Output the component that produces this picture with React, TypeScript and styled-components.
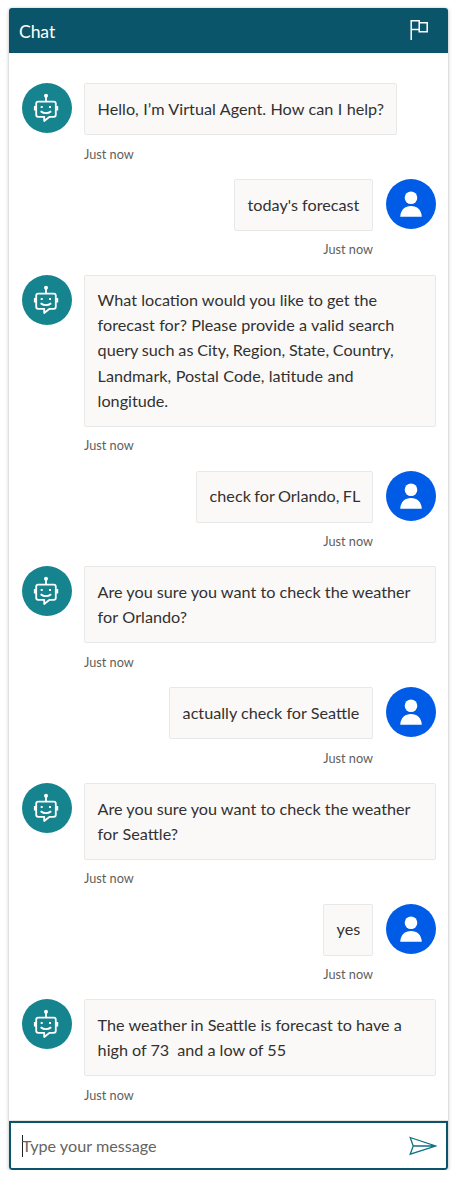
import React from "react";
import styled, { createGlobalStyle } from "styled-components";

const Global = createGlobalStyle`
  * { box-sizing: border-box; }
  body { margin: 0; background: #fff; font-family: Lato, "Liberation Sans", sans-serif; color: #323130; }
`;

const Panel = styled.main`
  display: flex;
  flex-direction: column;
  width: 439px;
  height: 1162px;
  margin: 8px 0 0 9px;
  border-radius: 3px;
  overflow: hidden;
  background: #fff;
  box-shadow: 0 1.5px 4px rgba(0, 0, 0, 0.22), 0 0 2px rgba(0, 0, 0, 0.12);
`;

const Header = styled.header`
  display: flex;
  align-items: center;
  justify-content: space-between;
  height: 45px;
  flex: none;
  padding: 0 20px 0 10px;
  background: #0b556a;
  color: #fff;
`;

const Title = styled.h1`
  margin: 2px 0 0;
  font-size: 17.6px;
  font-weight: 400;
  letter-spacing: -0.1px;
`;

const FlagIcon = styled.svg`
  width: 18px;
  height: 20px;
  margin-bottom: 1px;
`;

const Transcript = styled.section`
  flex: 1;
  padding: 30.16px 12px 0 13px;
`;

const Row = styled.article<{ $user?: boolean }>`
  display: flex;
  flex-direction: ${(p) => (p.$user ? "row-reverse" : "row")};
  gap: ${(p) => (p.$user ? 13 : 12)}px;
`;

const Avatar = styled.svg`
  width: 50px;
  height: 50px;
  flex: none;
`;

const Content = styled.div<{ $user?: boolean }>`
  display: flex;
  flex-direction: column;
  flex: 1;
  align-items: ${(p) => (p.$user ? "flex-end" : "flex-start")};
`;

const Bubble = styled.div<{ $width: number }>`
  width: ${(p) => p.$width}px;
  padding: 11.65625px 0 13.25px 12.6px;
  border: 1px solid #e9e8e8;
  border-radius: 2px;
  background: #faf9f8;
`;

const Line = styled.div<{ $space: number }>`
  font-size: 16.2px;
  line-height: 25.09375px;
  white-space: pre;
  word-spacing: ${(p) => p.$space}px;
`;

const Stamp = styled.time`
  height: 43.703125px;
  padding-top: 9.4px;
  font-size: 12.7px;
  line-height: 18px;
  color: #605e5c;
`;

const Composer = styled.footer`
  display: flex;
  align-items: center;
  justify-content: space-between;
  height: 49px;
  flex: none;
  padding: 0 9px 0 11px;
  border: 2px solid #0b556a;
  border-radius: 0 0 3px 3px;
  box-shadow: 0 -1px 0 #e6e4e2;
`;

const Entry = styled.div`
  display: flex;
  align-items: center;
  font-size: 16.2px;
  color: #666462;
`;

const Caret = styled.span`
  width: 1px;
  height: 22px;
  margin-right: -1px;
  background: #222;
`;

const SendIcon = styled.svg`
  width: 28px;
  height: 20px;
`;

const BotAvatar = () => (
  <Avatar viewBox="0 0 50 50" fill="none" stroke="#fff" strokeWidth="1.8">
    <circle cx="25" cy="25" r="25" fill="#16848e" stroke="none" />
    <path d="M24 13v5.2" />
    <circle cx="24" cy="12.8" r="2" fill="#fff" stroke="none" />
    <path d="M16.2 18.6h15.6q2 0 2 2v11.2q0 2-2 2h-4.2L22.2 38v-4.2h-6q-2 0-2-2V20.6q0-2 2-2Z" strokeLinejoin="round" />
    <path d="M12.9 23v4.6M35.2 23v4.6" strokeWidth="2" />
    <path d="M18.7 24h2M27 24h2" strokeWidth="2" />
    <path d="M18.6 28.2q5.4 4 10.6 0" />
  </Avatar>
);

const UserAvatar = () => (
  <Avatar viewBox="0 0 50 50" fill="#fff">
    <circle cx="25" cy="25" r="25" fill="#005ce6" />
    <circle cx="25" cy="18.7" r="6.3" />
    <path d="M14.2 37.7C14.5 31 19 27 25 27s10.5 4 10.8 10.7Z" />
  </Avatar>
);

type Message = { user?: boolean; width: number; lines: [text: string, space: number][] };

const messages: Message[] = [
  { width: 313, lines: [["Hello, I’m Virtual Agent. How can I help?", 0.3]] },
  { user: true, width: 139, lines: [["today's forecast", 0]] },
  {
    width: 352,
    lines: [
      ["What location would you like to get the", 0],
      ["forecast for? Please provide a valid search", 0.2],
      ["query such as City, Region, State, Country,", -0.4],
      ["Landmark, Postal Code, latitude and", 0.3],
      ["longitude.", 0],
    ],
  },
  { user: true, width: 177, lines: [["check for Orlando, FL", -0.7]] },
  { width: 352, lines: [["Are you sure you want to check the weather", 0], ["for Orlando?", 0.5]] },
  { user: true, width: 204, lines: [["actually check for Seattle", 0]] },
  { width: 352, lines: [["Are you sure you want to check the weather", 0], ["for Seattle?", 0.7]] },
  { user: true, width: 50, lines: [["yes", 0]] },
  { width: 352, lines: [["The weather in Seattle is forecast to have a", 0], ["high of 73  and a low of 55", -0.1]] },
];

export default function App() {
  return (
    <>
      <Global />
      <Panel>
        <Header>
          <Title>Chat</Title>
          <FlagIcon viewBox="0 0 18 20" fill="none" stroke="#fff" strokeWidth="1.5">
            <path d="M1.2 20V.8h8v8.7h-8M9.2 2.8h8v8.9H9.2V9.5" />
          </FlagIcon>
        </Header>
        <Transcript>
          {messages.map((m, i) => (
            <Row key={i} $user={m.user}>
              {m.user ? <UserAvatar /> : <BotAvatar />}
              <Content $user={m.user}>
                <Bubble $width={m.width}>
                  {m.lines.map(([text, space]) => (
                    <Line key={text} $space={space}>{text}</Line>
                  ))}
                </Bubble>
                <Stamp>Just now</Stamp>
              </Content>
            </Row>
          ))}
        </Transcript>
        <Composer>
          <Entry><Caret />Type your message</Entry>
          <SendIcon viewBox="0 0 28 20" fill="none" stroke="#0f7284" strokeWidth="1.3">
            <path d="M1.2 1.5 26.5 10 1.2 18.2 4.2 10Z M4.2 10H26" />
          </SendIcon>
        </Composer>
      </Panel>
    </>
  );
}
